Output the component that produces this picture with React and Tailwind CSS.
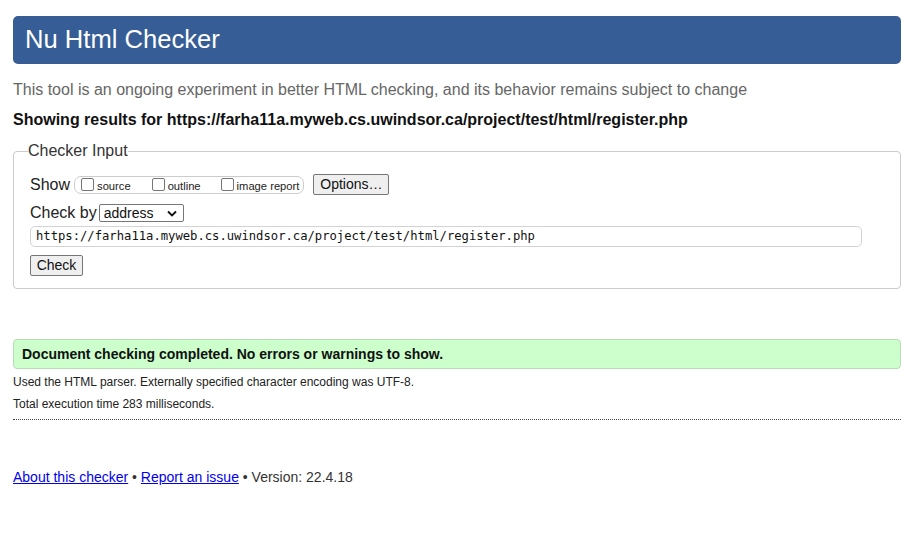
import React from "react";

function Box({ label }) {
  return (
    <span className="inline-flex items-center">
      <span className="w-[13px] h-[13px] border border-[#767676] rounded-[2px] bg-white inline-block" />
      <span className="ml-[3px] text-[11.2px] text-[#222] leading-[13px] mt-[3px]">{label}</span>
    </span>
  );
}

export default function App() {
  return (
    <div className="w-[916px] h-[535px] bg-white pl-[13px] pr-[15px] font-['Liberation_Sans',Arial,sans-serif] text-[#222]">
      <div className="pt-[16px]">
        <div className="h-[48px] rounded-[5px] bg-[#365d95] flex items-center pl-[12px] text-white text-[25.6px] leading-none">
          Nu Html Checker
        </div>
      </div>
      <p className="mt-[17px] text-[16px] leading-[18px] text-[#666]">
        This tool is an ongoing experiment in better HTML checking, and its behavior remains subject to change
      </p>
      <p className="mt-[12px] text-[16px] leading-[18px] font-bold text-[#111]">
        Showing results for https://farha11a.myweb.cs.uwindsor.ca/project/test/html/register.php
      </p>
      <fieldset className="mt-[13px] border border-[#ccc] rounded-[4px] pl-[16px] pr-[38px] pb-[12px]">
        <legend className="-ml-[2px] text-[16px] leading-[18px] text-[#333]">Checker Input</legend>
        <div className="mt-[14px] flex items-center h-[21px]">
          <span className="text-[16px] leading-[18px] text-[#222]">Show</span>
          <span className="ml-[4px] h-[18px] border border-[#ccc] rounded-[7px] flex items-center pl-[6px] pr-[4px]">
            <Box label="source" />
            <span className="w-[21px]" />
            <Box label="outline" />
            <span className="w-[20px]" />
            <Box label="image report" />
          </span>
          <span className="ml-[9px] h-[21px] w-[76px] bg-[#efefef] border border-[#767676] rounded-[2px] flex items-center justify-center text-[14px] text-[#111]">
            Options…
          </span>
        </div>
        <div className="mt-[9px] flex items-center h-[18px]">
          <span className="text-[16px] leading-[18px] text-[#222]">Check by</span>
          <span className="ml-[2px] h-[18px] w-[85px] border border-[#767676] rounded-[2px] flex items-center pl-[4px] pr-[4px] justify-between text-[14px] text-[#111]">
            <span>address</span>
            <svg width="10" height="7" viewBox="0 0 10 7" className="mr-[2px]">
              <path d="M1 1.5 L5 5.5 L9 1.5" fill="none" stroke="#111" strokeWidth="1.8" />
            </svg>
          </span>
        </div>
        <div className="mt-[4px] h-[21px] border border-[#d3d3d3] rounded-[5px] flex items-center pl-[5px] font-['DejaVu_Sans_Mono',monospace] text-[12.2px] text-[#111]">
          https://farha11a.myweb.cs.uwindsor.ca/project/test/html/register.php
        </div>
        <div className="mt-[8px] flex">
          <span className="h-[21px] w-[53px] bg-[#efefef] border border-[#767676] rounded-[2px] flex items-center justify-center text-[14px] text-[#111]">
            Check
          </span>
        </div>
      </fieldset>
      <div className="mt-[50px] h-[30px] bg-[#ccffcc] border border-[#b8dcb8] rounded-[4px] flex items-center pl-[8px] text-[14px] font-bold text-[#111]">
        Document checking completed. No errors or warnings to show.
      </div>
      <p className="mt-[6px] text-[12px] leading-[14px] text-[#222]">
        Used the HTML parser. Externally specified character encoding was UTF-8.
      </p>
      <p className="mt-[8px] text-[12px] leading-[14px] text-[#222]">Total execution time 283 milliseconds.</p>
      <div className="mt-[8px] border-t border-dotted border-[#444]" />
      <p className="mt-[49px] text-[14px] leading-[16px] text-[#333]">
        <a href="#" className="underline text-[#0000ee]">About this checker</a>
        {" • "}
        <a href="#" className="underline text-[#0000ee]">Report an issue</a>
        {" • Version: 22.4.18"}
      </p>
    </div>
  );
}
